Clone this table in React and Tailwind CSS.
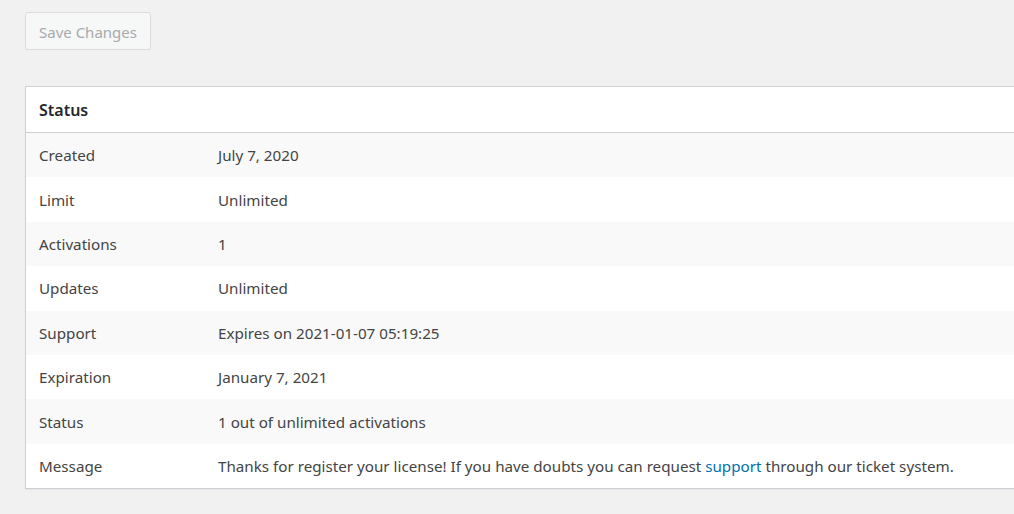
const rows = [
  ["Created", "July 7, 2020"],
  ["Limit", "Unlimited"],
  ["Activations", "1"],
  ["Updates", "Unlimited"],
  ["Support", "Expires on 2021-01-07 05:19:25"],
  ["Expiration", "January 7, 2021"],
  ["Status", "1 out of unlimited activations"],
];

export default function App() {
  return (
    <div className="min-h-[514px] w-full overflow-hidden bg-[#f1f1f1] font-['Noto_Sans',sans-serif] text-[#444]">
      <div className="pl-[25px] pt-[12px]">
        <button
          disabled
          className="h-[38px] rounded-[3px] border border-[#dcdcde] bg-[#f6f7f7] px-[13px] pt-[2px] text-[15px] text-[#a7aaad]"
        >
          Save Changes
        </button>
      </div>

      <div className="ml-[25px] mt-[36px] w-[1010px] border border-[#ccd0d4] bg-white shadow-[0_1px_1px_rgba(0,0,0,0.04)]">
        <div className="flex h-[46px] items-center border-b border-[#ccd0d4] px-[13px] pt-[1px] text-[16px] font-semibold text-[#23282d]">
          Status
        </div>
        {rows.map(([label, value], i) => (
          <div
            key={label}
            className={`flex h-[44.4px] items-center pt-[1px] text-[15.2px] ${i % 2 === 0 ? "bg-[#f9f9f9]" : "bg-white"}`}
          >
            <div className="w-[192px] pl-[13px]">{label}</div>
            <div>{value}</div>
          </div>
        ))}
        <div className="flex h-[44.4px] items-center bg-white pt-[1px] text-[15.2px]">
          <div className="w-[192px] pl-[13px]">Message</div>
          <div>
            Thanks for register your license! If you have doubts you can request{" "}
            <a href="#" className="text-[#0073aa]">support</a> through our ticket system.
          </div>
        </div>
      </div>
    </div>
  );
}
